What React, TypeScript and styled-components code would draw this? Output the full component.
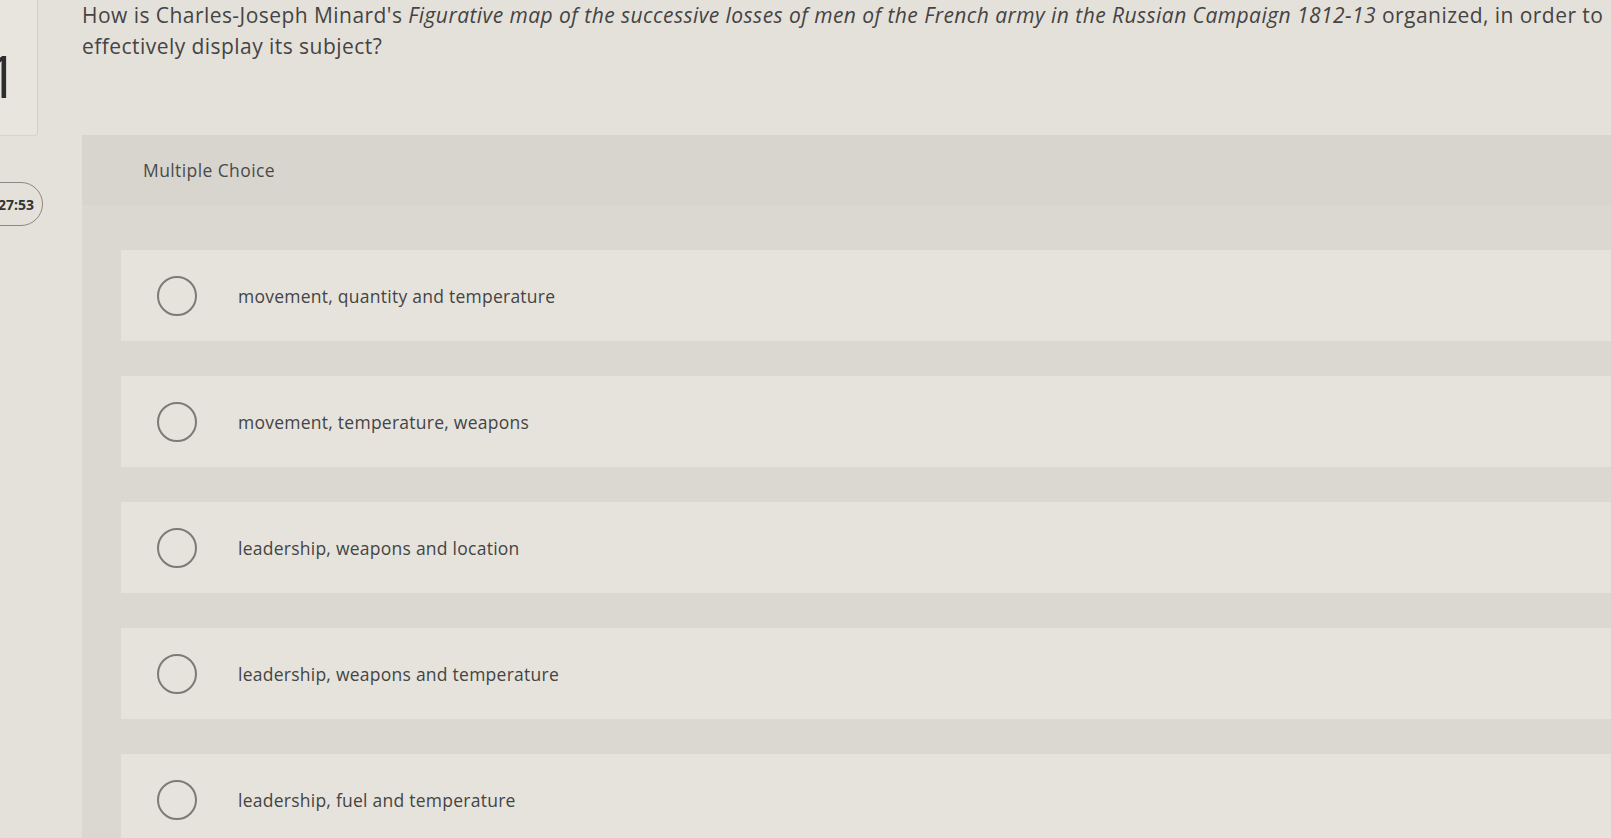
import styled, { createGlobalStyle } from "styled-components";

const GlobalStyle = createGlobalStyle`
  html, body {
    margin: 0;
    padding: 0;
    background: #e4e1da;
    overflow: hidden;
  }
  body {
    font-family: "Open Sans", Lato, sans-serif;
  }
`;

const options = [
  "movement, quantity and temperature",
  "movement, temperature, weapons",
  "leadership, weapons and location",
  "leadership, weapons and temperature",
  "leadership, fuel and temperature",
];

const App = () => {
  return (
    <>
      <GlobalStyle />
      <Page>
        <Sidebar>
          <NumberCard>
            <QuestionNumber>1</QuestionNumber>
          </NumberCard>
          <Timer>27:53</Timer>
        </Sidebar>
        <Main>
          <Question>
            How is Charles-Joseph Minard's <em>Figurative map of the successive losses of men of the French army in the Russian Campaign 1812-13</em> organized, in order to effectively display its subject?
          </Question>
          <Panel>
            <PanelHeader>Multiple Choice</PanelHeader>
            <OptionList>
              {options.map((text) => (
                <Option key={text}>
                  <Radio />
                  <OptionLabel>{text}</OptionLabel>
                </Option>
              ))}
            </OptionList>
          </Panel>
        </Main>
      </Page>
    </>
  );
};

const Page = styled.div`
  display: flex;
  width: 1611px;
  height: 838px;
  overflow: hidden;
`;

const Sidebar = styled.div`
  width: 42px;
  flex-shrink: 0;
  display: flex;
  flex-direction: column;
`;

const NumberCard = styled.div`
  height: 136px;
  width: 38px;
  background: #e8e5de;
  border-right: 1px solid #d3cfc7;
  border-bottom: 1px solid #d8d4cc;
  border-bottom-right-radius: 4px;
  display: flex;
  align-items: center;
  justify-content: flex-end;
  overflow: hidden;
  padding-right: 18px;
  box-sizing: border-box;
`;

const QuestionNumber = styled.span`
  font-size: 58px;
  line-height: 1;
  color: #2d2d2d;
  margin-top: 16px;
`;

const Timer = styled.div`
  margin-top: 46px;
  margin-left: -30px;
  width: 73px;
  height: 44px;
  box-sizing: border-box;
  border: 1.5px solid #8c8984;
  border-radius: 22px;
  display: flex;
  align-items: center;
  justify-content: flex-end;
  padding-right: 8px;
  font-size: 14px;
  font-weight: 700;
  color: #333;
`;

const Main = styled.div`
  flex: 1;
  min-width: 0;
  padding-left: 40px;
  display: flex;
  flex-direction: column;
`;

const Question = styled.p`
  margin: 0;
  width: 1560px;
  font-size: 21px;
  letter-spacing: 0.45px;
  line-height: 31px;
  color: #444;

  em {
    font-style: italic;
  }
`;

const Panel = styled.div`
  margin-top: 73px;
  margin-right: -40px;
  background: #dbd8d2;
  display: flex;
  flex-direction: column;
`;

const PanelHeader = styled.div`
  height: 70px;
  padding-left: 61px;
  display: flex;
  align-items: center;
  background: #d8d5cf;
  font-size: 17.5px;
  letter-spacing: 0.4px;
  color: #4a4a4a;
`;

const OptionList = styled.div`
  display: flex;
  flex-direction: column;
  gap: 35px;
  padding: 45px 0 40px 39px;
`;

const Option = styled.div`
  height: 91px;
  background: #e6e3dc;
  display: flex;
  align-items: center;
  padding-left: 36px;
`;

const Radio = styled.span`
  width: 36px;
  height: 36px;
  border: 2px solid #7d7b77;
  border-radius: 50%;
  flex-shrink: 0;
`;

const OptionLabel = styled.span`
  margin-left: 41px;
  font-size: 17.5px;
  letter-spacing: 0.25px;
  color: #444;
`;

export default App;
